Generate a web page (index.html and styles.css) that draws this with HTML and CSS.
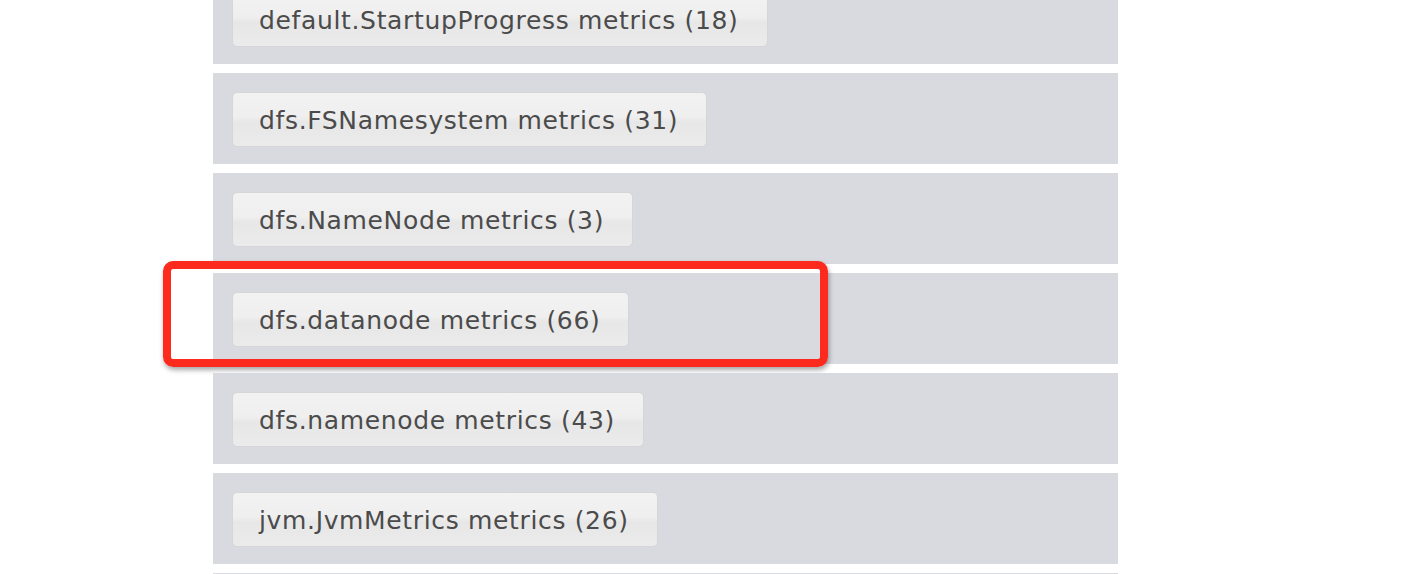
FILE: index.html
```html
<!DOCTYPE html>
<html lang="en">
<head>
    <meta charset="UTF-8">
    <title>Metrics</title>
    <link rel="stylesheet" href="styles.css">
</head>
<body>
    <div class="metrics-list">
        <div class="metric-row"><button class="metric-btn">default.StartupProgress metrics (18)</button></div>
        <div class="metric-row"><button class="metric-btn">dfs.FSNamesystem metrics (31)</button></div>
        <div class="metric-row"><button class="metric-btn">dfs.NameNode metrics (3)</button></div>
        <div class="metric-row highlighted"><button class="metric-btn">dfs.datanode metrics (66)</button></div>
        <div class="metric-row"><button class="metric-btn">dfs.namenode metrics (43)</button></div>
        <div class="metric-row"><button class="metric-btn">jvm.JvmMetrics metrics (26)</button></div>
        <div class="metric-row"></div>
    </div>
</body>
</html>
```

FILE: styles.css
```css
body {
    margin: 0;
    height: 574px;
    background: #fff;
    font-family: "DejaVu Sans", Verdana, sans-serif;
    overflow: hidden;
}

.metrics-list {
    width: 905px;
    margin: -27px 0 0 213px;
    display: flex;
    flex-direction: column;
    gap: 9px;
}

.metric-row {
    position: relative;
    flex-shrink: 0;
    height: 91px;
    background: #d9dadf;
    padding: 19px 0 0 19px;
    box-sizing: border-box;
}

.metric-btn {
    height: 55px;
    padding: 2px 28px 0 26px;
    border: 1px solid #d6d6d8;
    border-radius: 5px;
    background: linear-gradient(#f2f2f2 0%, #efefef 45%, #e7e7e7 55%, #ebebeb 100%);
    color: #4b4b4b;
    font-family: inherit;
    font-size: 25px;
    letter-spacing: 0.65px;
    cursor: pointer;
}

/* red annotation box drawn over the datanode row */
.highlighted::after {
    content: "";
    position: absolute;
    left: -50px;
    top: -12px;
    width: 649px;
    height: 90px;
    border: 8px solid #fd2a1e;
    border-radius: 10px;
    box-shadow: 1px 3px 5px rgba(0, 0, 0, 0.35);
    pointer-events: none;
}
```
